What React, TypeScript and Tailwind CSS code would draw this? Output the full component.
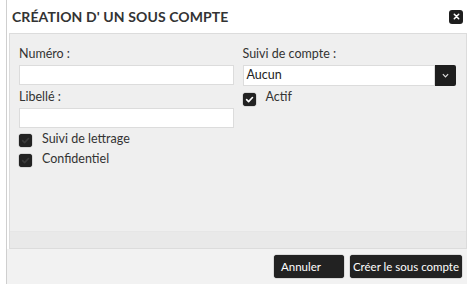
import { useState } from 'react';

function Check({ checked }: { checked: boolean }) {
  return (
    <span className="flex h-[13px] w-[13px] shrink-0 items-center justify-center rounded-[3px] bg-[#222] shadow-[0_0_1px_#000]">
      <svg width="9" height="9" viewBox="0 0 10 10">
        <path
          d="M1.8 5.2 L4 7.3 L8.3 2.8"
          fill="none"
          stroke={checked ? '#fff' : '#3a3a3a'}
          strokeWidth="1.8"
          strokeLinecap="round"
          strokeLinejoin="round"
        />
      </svg>
    </span>
  );
}

export default function App() {
  const [numero, setNumero] = useState('');
  const [libelle, setLibelle] = useState('');
  const [lettrage, setLettrage] = useState(false);
  const [confidentiel, setConfidentiel] = useState(false);
  const [actif, setActif] = useState(true);

  return (
    <div
      className="h-[285px] w-[472px] bg-white text-[#333]"
      style={{ fontFamily: 'Lato, "Open Sans", sans-serif' }}
    >
      <div className="ml-[6px] flex h-[284px] w-[461px] flex-col border-l border-[#cfcfcf]">
        <div className="flex h-[33px] items-center justify-between pl-[5px] pr-[4px]">
          <h2 className="text-[14px] font-bold tracking-[0.1px] text-[#333]">CRÉATION D' UN SOUS COMPTE</h2>
          <button className="flex h-[14px] w-[14px] items-center justify-center rounded-[3px] bg-[#1e1e1e]">
            <svg width="7" height="7" viewBox="0 0 8 8">
              <path d="M1.5 1.5 L6.5 6.5 M6.5 1.5 L1.5 6.5" stroke="#fff" strokeWidth="1.8" strokeLinecap="round" />
            </svg>
          </button>
        </div>

        <div className="ml-[2px] flex h-[216px] w-[458px] flex-col border border-[#dcdcdc] bg-[#efefef]">
          <div className="grid flex-1 grid-cols-2 gap-[9px] px-[9px] pt-[10px] text-[12.5px]">
            <div className="flex flex-col">
              <label className="h-[20px] leading-[20px]">Numéro :</label>
              <input
                value={numero}
                onChange={(e) => setNumero(e.target.value)}
                className="mt-[1px] h-[20px] w-full border border-[#dcdcdc] bg-white px-1 outline-none"
              />
              <label className="mt-[2px] h-[20px] leading-[20px]">Libellé :</label>
              <input
                value={libelle}
                onChange={(e) => setLibelle(e.target.value)}
                className="mt-[1px] h-[20px] w-full border border-[#dcdcdc] bg-white px-1 outline-none"
              />
              <label className="mt-[2px] flex h-[20px] cursor-pointer items-center gap-[10px]" onClick={() => setLettrage(!lettrage)}>
                <Check checked={lettrage} />
                <span className="-mt-[2px]">Suivi de lettrage</span>
              </label>
              <label className="flex h-[20px] cursor-pointer items-center gap-[10px]" onClick={() => setConfidentiel(!confidentiel)}>
                <Check checked={confidentiel} />
                <span className="-mt-[2px]">Confidentiel</span>
              </label>
            </div>
            <div className="flex flex-col">
              <label className="h-[20px] leading-[20px]">Suivi de compte :</label>
              <div className="mt-[1px] flex h-[21px] w-[213px]">
                <div className="flex flex-1 items-center border border-[#dcdcdc] bg-white px-[3px] text-[#222]">Aucun</div>
                <button className="flex w-[21px] items-center justify-center rounded-r-[2px] bg-[#1e1e1e]">
                  <svg width="7" height="5" viewBox="0 0 8 5">
                    <path d="M1 1 L4 4 L7 1" fill="none" stroke="#ddd" strokeWidth="1.4" />
                  </svg>
                </button>
              </div>
              <label className="mt-[4px] flex h-[18px] cursor-pointer items-center gap-[10px]" onClick={() => setActif(!actif)}>
                <Check checked={actif} />
                <span className="-mt-[4px]">Actif</span>
              </label>
            </div>
          </div>
          <div className="h-[17px] border-t border-[#e6e6e6] bg-[#e9e9e9]" />
        </div>

        <div className="flex flex-1 items-center justify-end gap-[6px] bg-[#f2f2f2] pr-[5px]">
          <button className="h-[23px] w-[70px] rounded-[3px] bg-[#222] pl-[7px] text-left text-[11.5px] text-white shadow-[0_0_1px_#000]">
            Annuler
          </button>
          <button className="h-[23px] w-[112px] rounded-[3px] bg-[#222] text-[11.5px] text-white shadow-[0_0_1px_#000]">
            Créer le sous compte
          </button>
        </div>
      </div>
    </div>
  );
}
